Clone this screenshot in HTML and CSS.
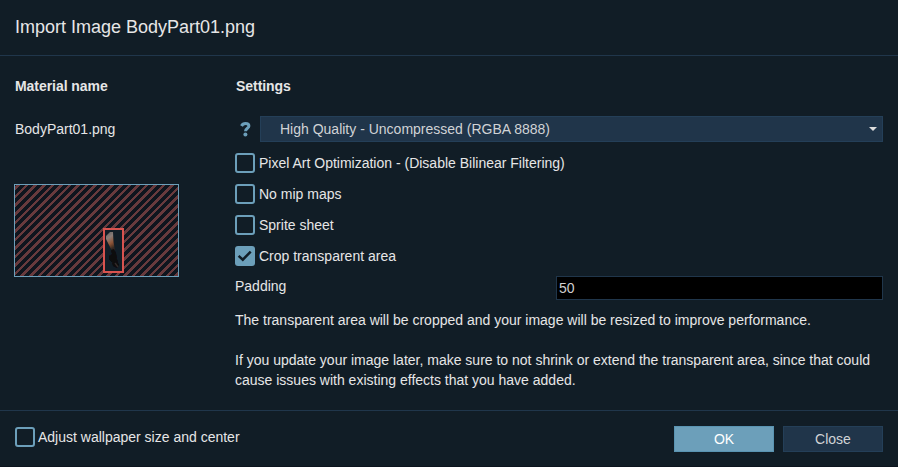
FILE: index.html
```html
<!DOCTYPE html>
<html lang="en">
<head>
<meta charset="utf-8">
<title>Import Image</title>
<link rel="stylesheet" href="styles.css">
</head>
<body>
<div class="modal">
  <header class="modal-header"><h1>Import Image BodyPart01.png</h1></header>
  <main class="modal-body">
    <section class="material">
      <h2>Material name</h2>
      <p class="filename">BodyPart01.png</p>
      <div class="preview">
        <div class="crop">
          <svg width="17" height="41" viewBox="0 0 17 41">
            <defs>
              <linearGradient id="arm" x1="0" y1="0" x2="0.3" y2="1">
                <stop offset="0" stop-color="#625f5e"/><stop offset=".35" stop-color="#8b7d78"/><stop offset=".7" stop-color="#8e5335"/><stop offset="1" stop-color="#302620"/>
              </linearGradient>
              <filter id="soft"><feGaussianBlur stdDeviation=".45"/></filter>
            </defs>
            <g filter="url(#soft)">
              <path d="M1 6 5 2 8 2 8.500 12 10 20 7 21 4 15 1 9Z" fill="url(#arm)"/>
              <path d="M6 20 9 19 11 23 12 29 14 36 12 38 8 36 7 32 4 29 4 26 7 24Z" fill="#0c090b"/>
              <path d="M10 33 13 37" stroke="#302b2a" stroke-width="1.500"/>
            </g>
          </svg>
        </div>
      </div>
    </section>
    <section class="settings">
      <h2>Settings</h2>
      <div class="format">
        <svg class="help" width="11" height="16" viewBox="0 0 11 16"><path d="M1.500 5C2.300 3.400 3.600 2.500 5.500 2.500 7.700 2.500 8.900 3.500 8.900 5 8.900 7.400 5.500 7.100 5.500 10.300" fill="none" stroke="#6c9fba" stroke-width="3"/><circle cx="5.400" cy="13.500" r="2" fill="#6c9fba"/></svg>
        <div class="select"><span>High Quality - Uncompressed (RGBA 8888)</span><i class="caret"></i></div>
      </div>
      <label class="check"><span class="box"></span>Pixel Art Optimization - (Disable Bilinear Filtering)</label>
      <label class="check"><span class="box"></span>No mip maps</label>
      <label class="check"><span class="box"></span>Sprite sheet</label>
      <label class="check"><span class="box checked"><svg width="20" height="20" viewBox="0 0 20 20"><path d="M3.600 9.800 7.800 13.700 15.700 5.600" fill="none" stroke="#111d26" stroke-width="2.500"/></svg></span>Crop transparent area</label>
      <div class="padding-row"><span>Padding</span><input type="text" value="50"></div>
      <p class="note">The transparent area will be cropped and your image will be resized to improve performance.</p>
      <p class="note">If you update your image later, make sure to not shrink or extend the transparent area, since that could cause issues with existing effects that you have added.</p>
    </section>
  </main>
  <footer class="modal-footer">
    <label class="check"><span class="box"></span>Adjust wallpaper size and center</label>
    <div class="actions"><button class="primary">OK</button><button>Close</button></div>
  </footer>
</div>
</body>
</html>
```
FILE: styles.css
```css
* { box-sizing: border-box; }
body {
  margin: 0;
  background: #111d26;
  color: #e6e6e6;
  font: 14px/20px "Liberation Sans", Arial, sans-serif;
  overflow: hidden;
}
h1, h2, p { margin: 0; }
.modal { height: 467px; display: flex; flex-direction: column; border-bottom: 1px solid #0c141e; }
.modal-header { height: 56px; padding: 14px 15px 0; border-bottom: 1px solid #20364b; }
h1 { font-size: 18px; line-height: 26px; font-weight: 400; }
h2 { font-size: 14px; line-height: 20px; font-weight: 700; }
.modal-body { height: 354px; padding: 20px 15px 0; display: grid; grid-template-columns: 220px 648px; }
.material { margin-left: -1px; }
.material h2, .filename { padding-left: 1px; }
.material h2, .settings h2 { letter-spacing: -0.05px; }
.filename { margin-top: 23px; }
.preview {
  margin-top: 45px;
  width: 165px;
  height: 93px;
  border: 1px solid #6c9fba;
  background: repeating-linear-gradient(135deg, #0f151e 0 1.3px, #683a3d 1.3px 3.8px, #0f151e 3.8px 6.05px);
  padding: 43px 0 0 88px;
}
.crop { width: 21px; height: 45px; border: 2px solid #d9534f; background: #111d26; }
.crop svg { display: block; }
.settings h2 { padding-left: 1px; }
.format { display: flex; margin-top: 20px; align-items: center; }
.help { margin: 0 9px 0 5px; }
.select {
  flex: 1;
  height: 26px;
  border: 1px solid #243f58;
  background: #20354a;
  color: #d0d3d6;
  padding: 0 5px 0 19px;
  display: flex;
  align-items: center;
  justify-content: space-between;
}
.caret { border: 4px solid transparent; border-top-color: #dddddd; border-bottom: 0; }
.check { display: flex; align-items: center; height: 20px; }
.settings .check { margin-top: 11px; }
.box { width: 20px; height: 20px; margin-right: 4px; border: 2px solid #6c9fba; border-radius: 3px; flex: none; }
.checked { background: #6c9fba; border: 0; }
.checked svg { display: block; }
.padding-row { display: flex; justify-content: space-between; margin-top: 10px; height: 24px; }
input {
  width: 327px;
  height: 24px;
  padding: 0 2px;
  background: #000;
  border: 1px solid #20364b;
  color: #d0d0d0;
  font: inherit;
}
.note { margin-top: 20px; }
.padding-row + .note { margin-top: 10px; }
.modal-footer {
  height: 56px;
  border-top: 1px solid #20364b;
  padding: 0 15px;
  display: flex;
  align-items: center;
  justify-content: space-between;
}
.modal-footer .check { margin-top: -4px; }
.modal-footer .box { margin-right: 3px; }
.actions { display: flex; gap: 9px; margin-top: 1px; }
button { width: 100px; height: 26px; padding: 0; font: inherit; color: #d0d3d6; background: #20354a; border: 1px solid #243f58; }
.primary { background: #6c9fba; border-color: #5a94b2; color: #fff; }
```
